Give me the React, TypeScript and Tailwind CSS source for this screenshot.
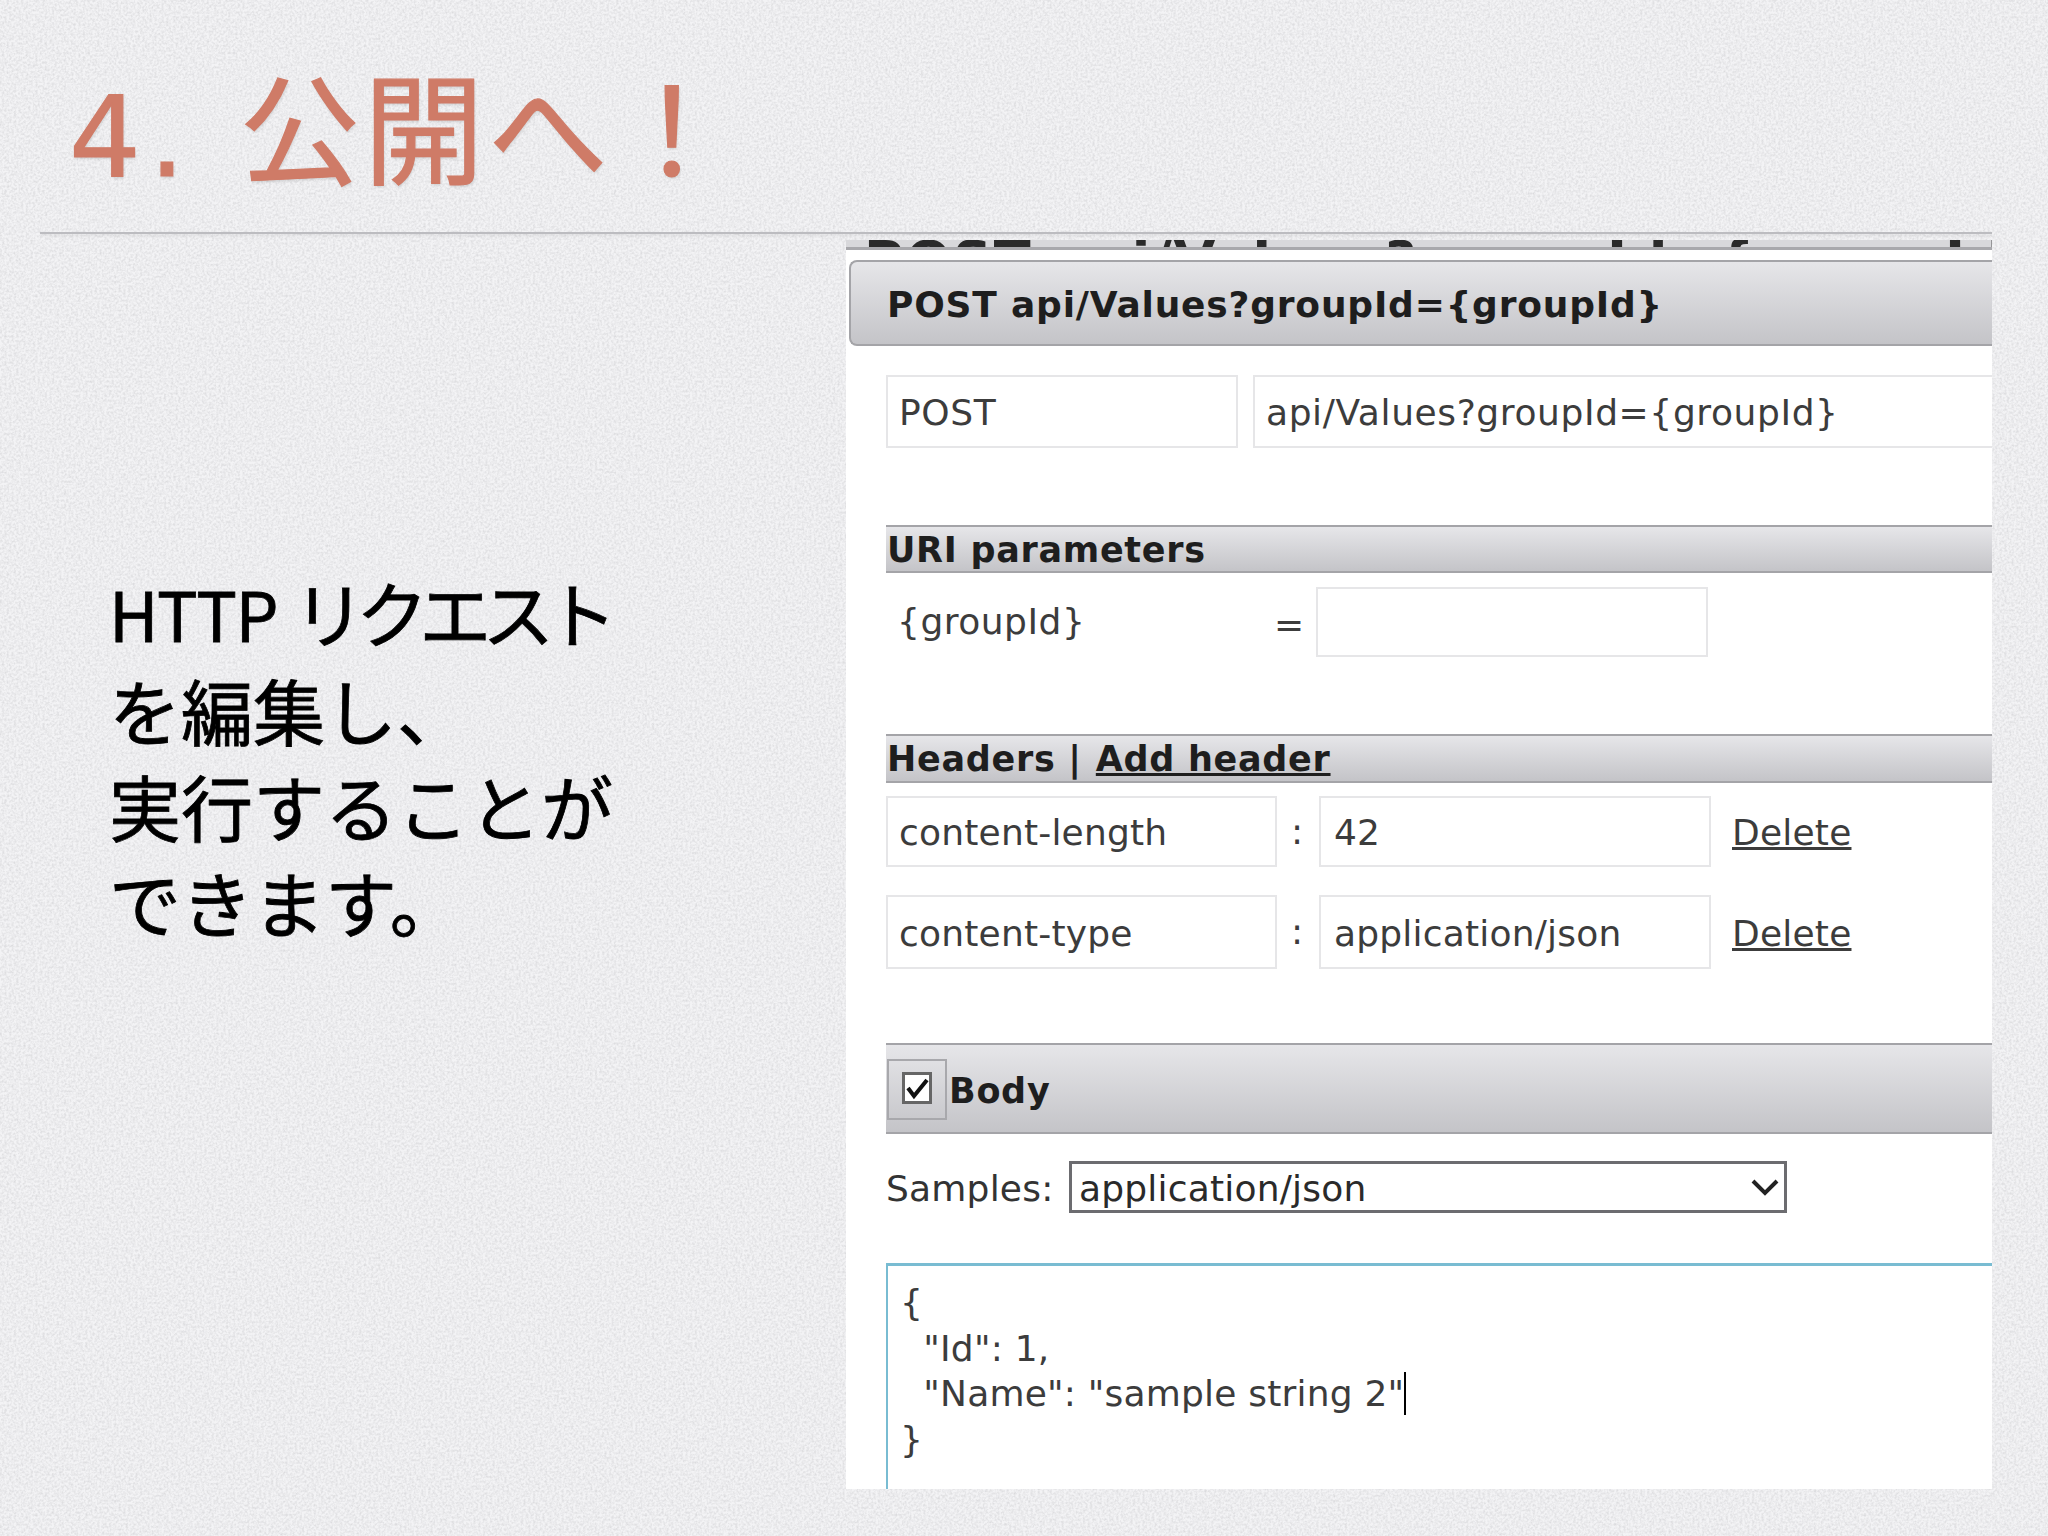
export default function App() {
  const jp = "font-['Noto_Sans_CJK_JP','Noto_Sans',sans-serif]";
  const box = "flex items-center border-2 border-[#e6e6e8] bg-white pt-[3px] text-[#3c3c3c]";
  const bar = "flex items-center border-y-2 border-[#a4a4a8] bg-gradient-to-b from-[#e6e6e9] to-[#c4c4c8] pt-[2px] text-[35px] tracking-[0.7px] font-bold text-[#1e1e1e]";
  return (
    <div className={`relative flex h-[1536px] w-[2048px] flex-col overflow-hidden bg-[#f3f3f5] ${jp}`}>
      <svg className="absolute inset-0 h-full w-full" aria-hidden="true">
        <filter id="paper">
          <feTurbulence type="fractalNoise" baseFrequency="0.42" numOctaves="2" seed="4" />
          <feColorMatrix values="0 0 0 0 0.5  0 0 0 0 0.5  0 0 0 0 0.52  0.8 0 0 0 -0.28" />
        </filter>
        <rect width="100%" height="100%" filter="url(#paper)" />
      </svg>
      <div className="relative h-[233px] pl-[69px] pt-[42px]">
        <h1 className="text-[124px] leading-[160px] font-normal whitespace-nowrap text-[#cf7b67] [-webkit-text-stroke:1.2px_#cf7b67] [text-shadow:1px_2px_3px_rgba(0,0,0,0.12)]">
          <span className="font-['DejaVu_Sans',sans-serif] text-[113px] tracking-[8px]">4.</span>
          <span className="ml-[47px] text-[120px] tracking-[4px]">公開へ！</span>
        </h1>
      </div>
      <div className="relative mt-[1px] mr-[56px] ml-[40px] h-[2px] bg-[#bcbcc0] shadow-[0_2px_3px_rgba(0,0,0,0.08)]" />
      <div className="relative flex flex-1 pt-[6px] pr-[56px] pb-[47px] pl-[846px]">
        <div className="absolute top-[329px] left-[109px] text-[72px] leading-[96px] whitespace-nowrap text-black [-webkit-text-stroke:0.8px_#000]">
          <span className="text-[68px] tracking-[-1.5px]">HTTP</span> <span className="tracking-[-9px]">リクエスト</span><br />を編集し、<br />実行することが<br />できます。
        </div>
        <div className="flex h-[1249px] flex-1 flex-col overflow-hidden bg-white font-['DejaVu_Sans',sans-serif] text-[36px] tracking-[0.2px]">
          <div className="relative h-[10px] shrink-0 overflow-hidden border-b-[3px] border-[#a8a8ac] bg-[#d8d8db]">
            <div className="absolute top-[-9px] left-[18px] text-[54px] leading-[60px] font-bold tracking-[1.8px] whitespace-nowrap text-[#2a2a2a]">POST api/Values?groupId={"{"}groupId{"}"}</div>
          </div>
          <div className="mt-[10px] ml-[3px] flex h-[86px] shrink-0 items-center rounded-l-[8px] border-y-2 border-l-2 border-[#a4a4a8] bg-gradient-to-b from-[#e6e6e9] to-[#c4c4c8] pt-[4px] pl-[36px] text-[36px] font-bold tracking-[0.8px] text-[#1e1e1e]">POST api/Values?groupId={"{"}groupId{"}"}</div>
          <div className="mt-[29px] ml-[40px] flex h-[73px] shrink-0 gap-[15px] tracking-[0.6px]">
            <div className={`${box} w-[352px] pl-[11px]`}>POST</div>
            <div className={`${box} flex-1 border-r-0 pl-[11px]`}>api/Values?groupId={"{"}groupId{"}"}</div>
          </div>
          <div className={`${bar} mt-[77px] ml-[40px] h-[48px] shrink-0 pl-[1px]`}>URI parameters</div>
          <div className="mt-[14px] ml-[40px] flex h-[70px] shrink-0 items-center tracking-[0.5px]">
            <span className="w-[388px] pl-[11px] text-[#3c3c3c]">{"{"}groupId{"}"}</span>
            <span className="w-[42px] pt-[6px] text-[#3c3c3c]">=</span>
            <div className={`${box} h-full w-[392px]`} />
          </div>
          <div className={`${bar} mt-[77px] ml-[40px] h-[49px] shrink-0 gap-[14px] pl-[1px]`}>
            <span>Headers |</span><span className="underline">Add header</span>
          </div>
          <div className="mt-[13px] ml-[40px] flex h-[71px] shrink-0 items-center">
            <div className={`${box} h-full w-[391px] pl-[11px]`}>content-length</div>
            <span className="w-[42px] pl-[14px] text-[#3c3c3c]">:</span>
            <div className={`${box} h-full w-[392px] pl-[13px]`}>42</div>
            <span className="ml-[21px] pt-[3px] text-[#3c3c3c] underline">Delete</span>
          </div>
          <div className="mt-[28px] ml-[40px] flex h-[74px] shrink-0 items-center">
            <div className={`${box} h-full w-[391px] pl-[11px]`}>content-type</div>
            <span className="w-[42px] pl-[14px] text-[#3c3c3c]">:</span>
            <div className={`${box} h-full w-[392px] pl-[13px]`}>application/json</div>
            <span className="ml-[21px] pt-[3px] text-[#3c3c3c] underline">Delete</span>
          </div>
          <div className={`${bar} mt-[74px] ml-[40px] h-[91px] shrink-0 pl-[1px]`}>
            <div className="flex h-[61px] w-[60px] items-center justify-center border-2 border-[#a8a8ac] pb-[4px]">
              <div className="flex h-[32px] w-[30px] items-center justify-center border-[3px] border-[#666] bg-white">
                <svg viewBox="0 0 24 24" className="h-[24px] w-[24px]" fill="none" stroke="#111" strokeWidth="4"><path d="M3 12l6 8L22 4" /></svg>
              </div>
            </div>
            <span className="ml-[2px] pt-[3px]">Body</span>
          </div>
          <div className="mt-[27px] ml-[40px] flex h-[52px] shrink-0 items-center">
            <span className="w-[183px] pt-[3px] text-[#333]">Samples:</span>
            <div className="flex h-full w-[718px] items-center justify-between border-[3px] border-[#6c6c70] pr-[5px] pl-[7px] text-[#2a2a2a]">
              <span className="pt-[3px]">application/json</span>
              <svg viewBox="0 0 28 18" className="h-[18px] w-[28px]" fill="none" stroke="#222" strokeWidth="4"><path d="M2 3l12 12L26 3" /></svg>
            </div>
          </div>
          <div className="mt-[50px] ml-[40px] flex-1 border-t-[3px] border-l-2 border-[#79bcd2] pt-[14px] pl-[12px] leading-[45.5px] whitespace-pre text-[#3c3c3c]">
            <div>{"{"}</div>
            <div>{'  "Id": 1,'}</div>
            <div className="flex items-center">{'  "Name": "sample string 2"'}<span className="h-[43px] w-[2px] bg-black" /></div>
            <div>{"}"}</div>
          </div>
        </div>
      </div>
    </div>
  );
}
